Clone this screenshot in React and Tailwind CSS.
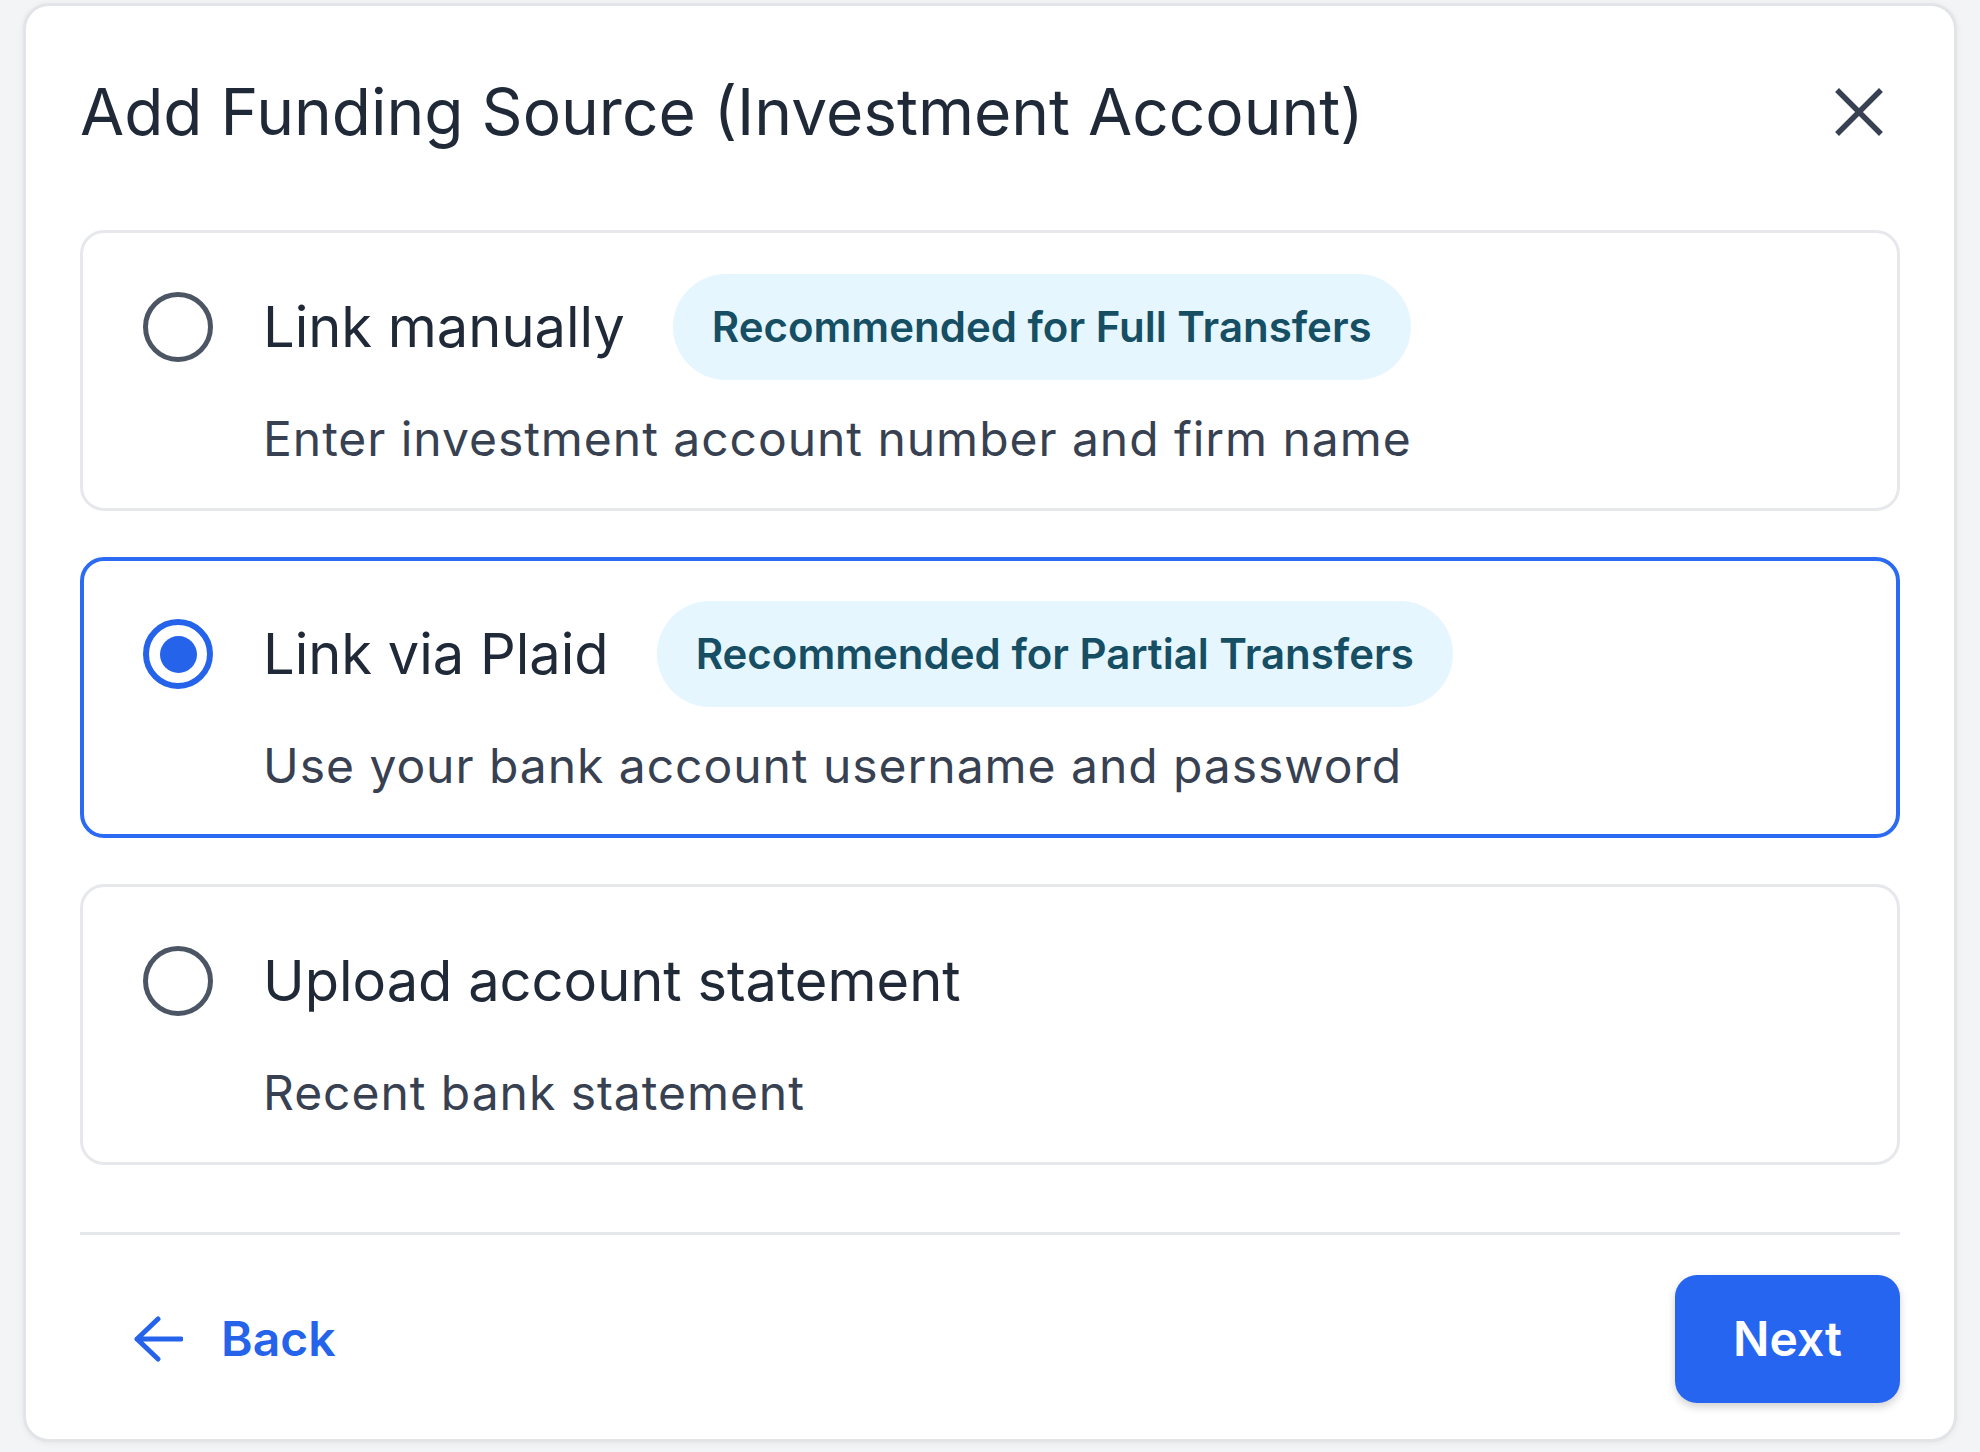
import React from "react";

function Radio({ selected }) {
  if (selected) {
    return (
      <div className="mt-[18px] flex h-[70px] w-[70px] shrink-0 items-center justify-center rounded-full border-[6px] border-[#2563eb]">
        <div className="h-[37px] w-[37px] rounded-full bg-[#2563eb]" />
      </div>
    );
  }
  return <div className="mt-[18px] h-[70px] w-[70px] shrink-0 rounded-full border-[5px] border-[#4b5563]" />;
}

function Option({ title, badge, desc, selected }) {
  return (
    <div
      className={
        "flex gap-[50px] rounded-[24px] bg-white pr-[40px] " +
        (selected
          ? "border-[4px] border-[#2b6af2] pl-[59px] pt-[40px] pb-[40px]"
          : "border-[3px] border-[#e6e8eb] pl-[60px] pt-[41px] pb-[41px]")
      }
    >
      <Radio selected={selected} />
      <div className="flex flex-col">
        <div className="flex h-[106px] items-center gap-[48px]">
          <span className="text-[56px] leading-[68px] text-[#1f2937]">{title}</span>
          {badge && (
            <span className="flex h-[106px] items-center rounded-full bg-[#e6f6fe] px-[39px] text-[42px] font-semibold leading-[52px] text-[#164e63]">
              {badge}
            </span>
          )}
        </div>
        <p className="mt-[30px] text-[48px] leading-[57px] tracking-[0.02em] text-[#374151]">{desc}</p>
      </div>
    </div>
  );
}

export default function App() {
  return (
    <div
      className="min-h-screen bg-[#f3f4f6] px-[23px] pt-[3px] pb-[10px]"
      style={{ fontFamily: "Inter, 'Noto Sans', sans-serif" }}
    >
      <div className="rounded-[26px] border-[3px] border-[#e2e4e8] bg-white px-[54px] pt-[68px] pb-[36px] shadow-[0_1px_6px_rgba(0,0,0,0.06)]">
        <div className="flex items-center justify-between">
          <h1 className="text-[64px] font-normal leading-[76px] text-[#1f2937]">
            Add Funding Source (Investment Account)
          </h1>
          <button className="mr-[17px] flex h-[48px] w-[48px] items-center justify-center" aria-label="Close">
            <svg width="48" height="48" viewBox="0 0 48 48" fill="none">
              <path d="M4 4 L44 44 M44 4 L4 44" stroke="#374151" strokeWidth="5.5" strokeLinecap="square" />
            </svg>
          </button>
        </div>

        <div className="mt-[80px] flex flex-col gap-[46px]">
          <Option
            title="Link manually"
            badge="Recommended for Full Transfers"
            desc="Enter investment account number and firm name"
          />
          <Option
            title="Link via Plaid"
            badge="Recommended for Partial Transfers"
            desc="Use your bank account username and password"
            selected
          />
          <Option title="Upload account statement" desc="Recent bank statement" />
        </div>

        <div className="mt-[67px] border-t-[3px] border-[#e5e7eb] pt-[40px]">
          <div className="flex items-center justify-between">
            <button className="flex items-center gap-[38px] pl-[53px] text-[48px] font-semibold text-[#2563eb]">
              <svg width="50" height="46" viewBox="0 0 50 46" fill="none">
                <path d="M48 23 H4 M25 3 L4 23 L25 43" stroke="#2563eb" strokeWidth="5" strokeLinecap="round" strokeLinejoin="round" />
              </svg>
              <span>Back</span>
            </button>
            <button className="flex h-[128px] w-[225px] items-center justify-center rounded-[22px] bg-[#2665f0] text-[48px] font-semibold text-white shadow-[0_4px_8px_rgba(0,0,0,0.18)]">
              Next
            </button>
          </div>
        </div>
      </div>
    </div>
  );
}
